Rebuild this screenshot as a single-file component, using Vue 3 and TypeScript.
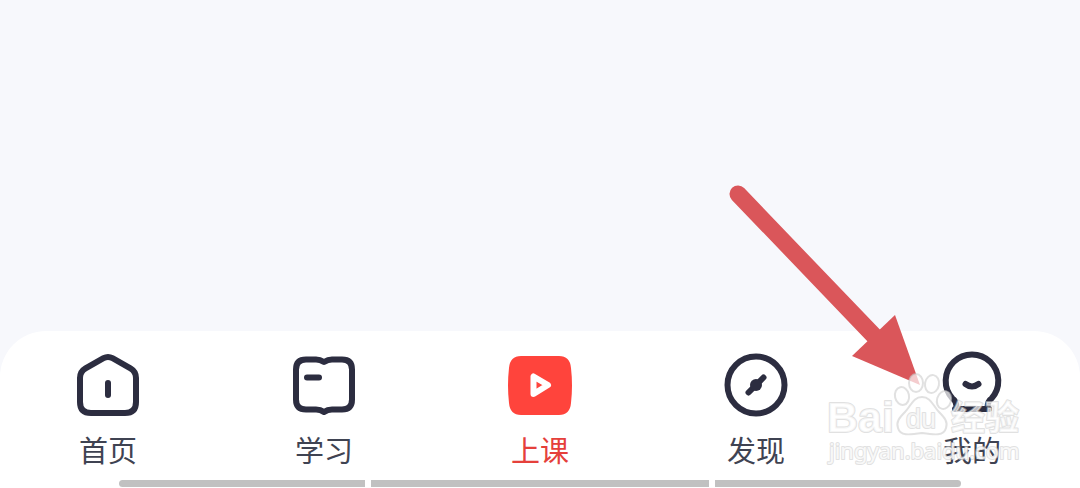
<script setup lang="ts">
import { ref } from 'vue'

type TabId = 'home' | 'study' | 'lesson' | 'discover' | 'mine'

const tabs: { id: TabId; label: string }[] = [
  { id: 'home', label: '首页' },
  { id: 'study', label: '学习' },
  { id: 'lesson', label: '上课' },
  { id: 'discover', label: '发现' },
  { id: 'mine', label: '我的' },
]

const active = ref<TabId>('lesson')
</script>

<template>
  <div class="screen">
    <main class="content"></main>

    <footer class="dock">
      <nav class="tabs">
        <button
          v-for="tab in tabs"
          :key="tab.id"
          type="button"
          class="tab"
          :class="{ active: active === tab.id }"
          @click="active = tab.id"
        >
          <svg class="icon" viewBox="0 0 72 72" aria-hidden="true">
            <g v-if="tab.id === 'home'" class="line">
              <path d="M8 29 Q8 22.500 13.500 19.300 L31.500 9.200 Q36 6.800 40.500 9.200 L58.500 19.300 Q64 22.500 64 29 V53 Q64 64 53 64 H19 Q8 64 8 53 Z" />
              <path d="M36 34 V46" />
            </g>
            <g v-else-if="tab.id === 'study'" class="line">
              <path d="M36 13 Q32 10.500 28 10.500 H18 Q8 10.500 8 20.500 V50.500 Q8 60.500 18 60.500 H28 Q32.500 60.500 36 63 Q39.500 60.500 44 60.500 H54 Q64 60.500 64 50.500 V20.500 Q64 10.500 54 10.500 H44 Q40 10.500 36 13 Z" />
              <path d="M19 28.500 H31" />
            </g>
            <g v-else-if="tab.id === 'lesson'">
              <path class="tile" d="M17 7 H55 Q66 7 67 19 Q69 36.500 67 54 Q66 66 55 66 H17 Q6 66 5 54 Q3 36.500 5 19 Q6 7 17 7 Z" />
              <path class="play" d="M29.500 27.500 V45 L44 36 Z" />
            </g>
            <g v-else-if="tab.id === 'discover'" class="line">
              <circle cx="36" cy="36" r="28.500" />
              <path d="M28.500 43.500 L43.500 28.500" />
              <circle class="solid" cx="36" cy="36" r="6" />
            </g>
            <g v-else class="line">
              <path d="M19 60 H53 M20.500 59 Q20.500 52 16.500 49.500 A26.300 26.300 0 1 1 55.500 49.500 Q51.500 52 51.500 59" />
              <path d="M29.500 35 Q36 40 42.500 35" />
            </g>
          </svg>
          <span class="label">{{ tab.label }}</span>
        </button>
      </nav>
      <div class="handle"><i></i><i class="wide"></i><i></i></div>
    </footer>

    <svg class="arrow" viewBox="0 0 200 210" aria-hidden="true">
      <path class="shaft" d="M14 14 L155 161" />
      <path class="head" d="M171 135 L196 205 L128 176 Z" />
    </svg>

    <svg class="watermark" viewBox="0 0 210 100" aria-label="Baidu 经验">
      <text class="brand" x="7" y="62">Bai</text>
      <ellipse cx="82" cy="26" rx="7" ry="9" transform="rotate(-12 82 26)" />
      <ellipse cx="96" cy="13" rx="7" ry="9" />
      <ellipse cx="112" cy="14" rx="7" ry="9" transform="rotate(10 112 14)" />
      <ellipse cx="124" cy="30" rx="7" ry="9" transform="rotate(16 124 30)" />
      <path d="M102 27 C111 27 113 36 119 42 C125 48 128 52 126 58 C124 66 115 65 102 63 C89 65 80 66 78 58 C76 52 79 48 85 42 C91 36 93 27 102 27 Z" />
      <text class="du" x="86" y="58">du</text>
      <text class="cn" x="131" y="60">经验</text>
      <text class="site" x="9" y="89">jingyan.baidu.com</text>
    </svg>
  </div>
</template>

<style>
body {
  margin: 0;
  background: #f7f8fc;
}
</style>

<style scoped>
.screen {
  position: relative;
  display: flex;
  flex-direction: column;
  min-height: 100vh;
  overflow: hidden;
  background: #f7f8fc;
  font-family: "Noto Sans CJK SC", sans-serif;
}

.content {
  flex: 1;
}

.dock {
  padding-top: 18px;
  border-radius: 46px 46px 0 0;
  background: #fff;
}

.tabs {
  display: grid;
  grid-template-columns: repeat(5, 1fr);
}

.tab {
  display: flex;
  flex-direction: column;
  align-items: center;
  gap: 8px;
  padding: 0;
  border: 0;
  background: none;
  color: #3f4352;
  font: inherit;
  cursor: pointer;
}

.tab.active {
  color: #e5403b;
}

.icon {
  width: 72px;
  height: 72px;
}

.label {
  font-size: 29px;
  line-height: 40px;
}

.line {
  fill: none;
  stroke: #2c2d40;
  stroke-width: 6;
  stroke-linecap: round;
  stroke-linejoin: round;
}

.solid {
  fill: #2c2d40;
  stroke: none;
}

.tile {
  fill: #ff443c;
}

.play {
  fill: none;
  stroke: #fff;
  stroke-width: 6;
  stroke-linejoin: round;
}

.handle {
  display: flex;
  gap: 6px;
  width: 78%;
  margin: 11px auto 1px;
  border-radius: 4px;
  overflow: hidden;
}

.handle i {
  flex: 245;
  height: 7px;
  background: #c1c1c1;
}

.handle .wide {
  flex: 338;
}

.arrow {
  position: absolute;
  right: 156px;
  bottom: 98px;
  width: 200px;
  height: 210px;
  pointer-events: none;
}

.shaft {
  stroke: #da565a;
  stroke-width: 17;
  stroke-linecap: round;
}

.head {
  fill: #da565a;
}

.watermark {
  position: absolute;
  right: 50px;
  bottom: 18px;
  width: 210px;
  height: 100px;
  fill: rgba(255, 255, 255, 0.7);
  stroke: rgba(205, 205, 205, 0.6);
  stroke-width: 2;
  stroke-linejoin: round;
  pointer-events: none;
}

.watermark text {
  font-family: "Liberation Sans", "Noto Sans CJK SC", sans-serif;
  font-weight: 700;
  paint-order: stroke;
}

.watermark .brand {
  font-size: 43px;
}

.watermark .du {
  font-size: 27px;
  font-weight: 400;
}

.watermark .cn {
  font-size: 34px;
}

.watermark .site {
  font-family: "Noto Sans", sans-serif;
  font-size: 22px;
  font-weight: 400;
  fill: rgba(255, 255, 255, 0.8);
}
</style>
